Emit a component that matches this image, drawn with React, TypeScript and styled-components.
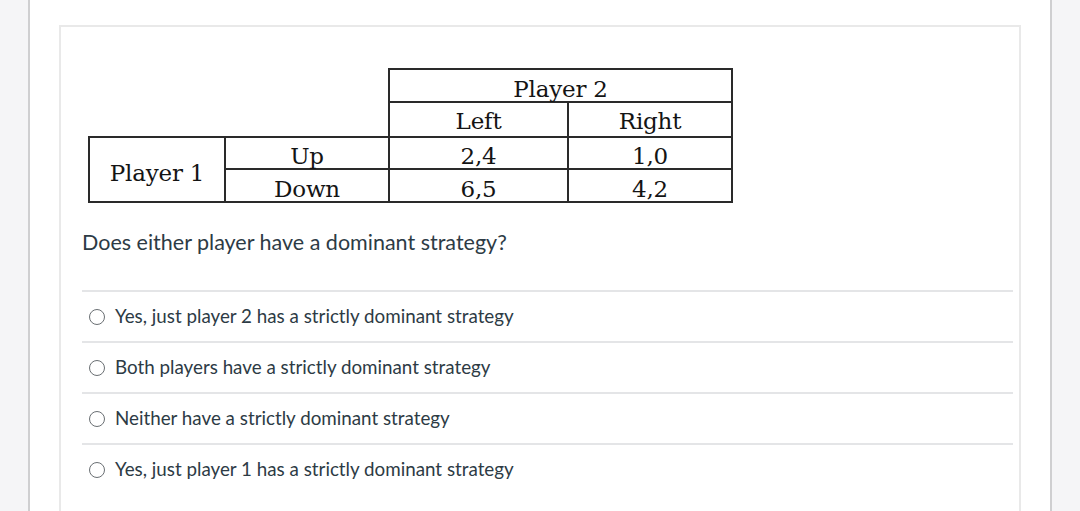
import React from "react";
import styled, { createGlobalStyle } from "styled-components";

const Global = createGlobalStyle`
  html, body { margin: 0; padding: 0; }
  body {
    background: #f5f5f7;
    font-family: Lato, "Open Sans", sans-serif;
    color: #2d3b45;
    overflow: hidden;
  }
`;

const Page = styled.div`
  display: flex;
  height: 511px;
  padding-left: 28px;
`;

const Main = styled.main`
  background: #fff;
  border-left: 2px solid #cfcfd1;
  border-right: 2px solid #cfcfd1;
  padding: 25px 29px 0 29px;
  box-sizing: content-box;
  width: 962px;
`;

const Card = styled.section`
  border: 2px solid #e9e9e9;
  border-bottom: none;
  height: 100%;
  box-sizing: border-box;
  padding: 41px 6px 0 21px;
`;

const Matrix = styled.table`
  border-collapse: collapse;
  margin-left: 6px;
  font-family: "DejaVu Serif", "Liberation Serif", serif;
  font-size: 23px;
  color: #141414;
  letter-spacing: -0.2px;
`;

const Row = styled.tr<{ $h: number }>`
  height: ${(p) => p.$h}px;
`;

const Cell = styled.td<{ $w?: number; $blank?: boolean; $lift?: number }>`
  border: ${(p) => (p.$blank ? "none" : "2px solid #2a2a2a")};
  ${(p) => (p.$w ? `width: ${p.$w}px;` : "")}
  padding: ${(p) => (p.$lift ? "2px 0 0 0" : "6px 0 0 0")};
  text-align: center;
  vertical-align: middle;
  line-height: 20px;
  box-sizing: border-box;
`;

const Question = styled.p`
  margin: 27px 0 0 0;
  font-size: 21.5px;
  line-height: 24px;
  color: #2d3b45;
`;

const Answers = styled.ul`
  list-style: none;
  margin: 36px 0 0 0;
  padding: 0;
`;

const Answer = styled.li`
  border-top: 2px solid #e4e5e7;
  height: 51px;
  box-sizing: border-box;
  display: flex;
  align-items: center;
  padding: 0 0 2px 7px;
  gap: 10px;
  font-size: 18.8px;
  color: #2d3b45;
`;

const Radio = styled.span`
  width: 16px;
  height: 16px;
  border: 1.5px solid #6a6f73;
  border-radius: 50%;
  box-sizing: border-box;
  flex: none;
  margin-top: 2px;
`;

const options = [
  "Yes, just player 2 has a strictly dominant strategy",
  "Both players have a strictly dominant strategy",
  "Neither have a strictly dominant strategy",
  "Yes, just player 1 has a strictly dominant strategy",
];

export default function App() {
  return (
    <>
      <Global />
      <Page>
        <Main>
          <Card>
            <Matrix>
              <tbody>
                <Row $h={33}>
                  <Cell $blank $w={136} />
                  <Cell $blank $w={164} />
                  <Cell colSpan={2}>Player 2</Cell>
                </Row>
                <Row $h={35}>
                  <Cell $blank />
                  <Cell $blank />
                  <Cell $w={179} $lift={1}>Left</Cell>
                  <Cell $w={164} $lift={1}>Right</Cell>
                </Row>
                <Row $h={32}>
                  <Cell rowSpan={2}>Player 1</Cell>
                  <Cell>Up</Cell>
                  <Cell>2,4</Cell>
                  <Cell>1,0</Cell>
                </Row>
                <Row $h={33}>
                  <Cell>Down</Cell>
                  <Cell>6,5</Cell>
                  <Cell>4,2</Cell>
                </Row>
              </tbody>
            </Matrix>
            <Question>Does either player have a dominant strategy?</Question>
            <Answers>
              {options.map((o) => (
                <Answer key={o}>
                  <Radio />
                  {o}
                </Answer>
              ))}
            </Answers>
          </Card>
        </Main>
      </Page>
    </>
  );
}
